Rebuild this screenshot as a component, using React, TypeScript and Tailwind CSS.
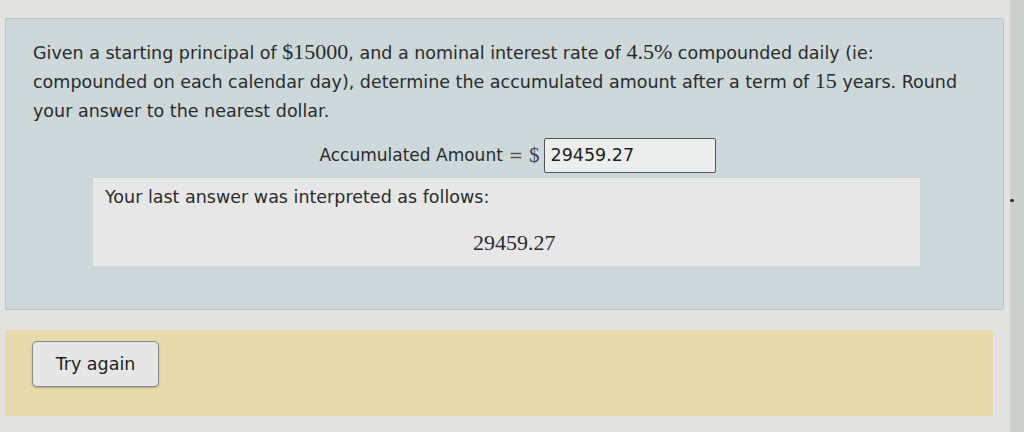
const sans = "font-['DejaVu_Sans','Liberation_Sans',sans-serif]";
const serif = "font-['Liberation_Serif','Times_New_Roman',serif]";

const Num: React.FC<{ children: React.ReactNode }> = ({ children }) => (
    <span className={`${serif} text-[22px] leading-none`}>{children}</span>
);

export default function App() {
    return (
        <div className={`w-[1024px] h-[432px] overflow-hidden bg-[#e2e3e1] flex ${sans} text-[#2b2b2b]`}>
            <div className="w-[1010px] flex flex-col">
                {/* question panel */}
                <div className="ml-[5px] mr-[6px] mt-[18px] h-[292px] bg-[#ccd8d9] border border-[#b9c4c4] rounded-[2px] flex flex-col">
                    <p className="pl-[27px] pr-[10px] pt-[20px] text-[17.5px] leading-[29px] whitespace-nowrap">
                        Given a starting principal of <Num>$15000</Num>, and a nominal interest rate of <Num>4.5%</Num> compounded daily (ie:
                        <br />
                        compounded on each calendar day), determine the accumulated amount after a term of <Num>15</Num> years. Round
                        <br />
                        your answer to the nearest dollar.
                    </p>
                    <div className="mt-[12px] flex items-center justify-center pl-[26px] text-[17px]">
                        <span>Accumulated Amount</span>
                        <span className="ml-[6px] text-[#555]">=</span>
                        <span className={`${serif} text-[21px] ml-[6px] text-[#444]`}>$</span>
                        <div className="ml-[4px] w-[172px] h-[35px] border border-[#555] rounded-[2px] bg-[#eceeed] flex items-center px-[6px] text-[17.5px] text-[#1e1e1e]">
                            29459.27
                        </div>
                    </div>
                    <div className="mt-[5px] ml-[87px] w-[827px] h-[88px] bg-[#e6e7e6] flex flex-col">
                        <div className="pl-[12px] pt-[8px] text-[17.5px] leading-[22px]">Your last answer was interpreted as follows:</div>
                        <div className={`${serif} text-[22px] mt-[18px] ml-[380px]`}>29459.27</div>
                    </div>
                </div>
                {/* feedback panel */}
                <div className="ml-[5px] mr-[17px] mt-[20px] h-[86px] bg-[#e7dbae] rounded-[2px] flex items-start pt-[11px]">
                    <button className="ml-[27px] w-[127px] h-[46px] bg-[#e6e6e6] border border-[#8a8a8a] rounded-[5px] shadow-[0_1px_2px_rgba(0,0,0,0.25)] text-[17.5px] text-[#222]">
                        Try again
                    </button>
                </div>
            </div>
            <div className="flex-1 bg-[#cdcfcd] flex flex-col">
                <div className="mt-[199px] w-[4px] h-[3px] bg-[#333] rounded-full" />
            </div>
        </div>
    );
}
